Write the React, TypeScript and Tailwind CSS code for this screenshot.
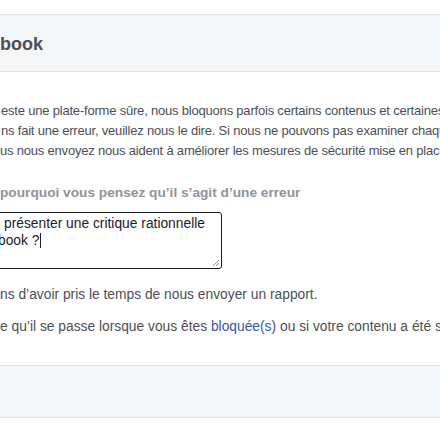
import React from 'react';

const App: React.FC = () => {
  return (
    <div className="w-[440px] h-[440px] bg-white overflow-hidden font-['Liberation_Sans',Arial,sans-serif] text-[#4b4f56]">
      <div className="h-[14px]" />

      {/* dialog header */}
      <div className="h-[58px] border-y border-[#e5e5e5] bg-[#f5f6f7] flex items-center pt-[1px] whitespace-nowrap">
        <span className="text-[18px] font-bold leading-[22px] text-[#4b4f56]">book</span>
      </div>

      {/* explanation */}
      <div className="mt-[29px] text-[13px] tracking-[-0.2px] leading-[20px] whitespace-nowrap">
        <div className="pl-[1px]">este une plate-forme sûre, nous bloquons parfois certains contenus et certaines actions.</div>
        <div className="pl-[1px]">ns fait une erreur, veuillez nous le dire. Si nous ne pouvons pas examiner chaque signalement,</div>
        <div>us nous envoyez nous aident à améliorer les mesures de sécurité mise en place.</div>
      </div>

      <div className="mt-[22px] text-[13.7px] leading-[20px] font-bold text-[#90949c] whitespace-nowrap">
        pourquoi vous pensez qu’il s’agit d’une erreur
      </div>

      {/* text box */}
      <div className="mt-[9px] -ml-[10px] w-[232px] h-[57px] border border-[#1c1e21] rounded-[3px] relative pl-[13px] pt-[2px] text-[13.8px] leading-[17px] text-[#1d2129] whitespace-nowrap overflow-hidden">
        <div>présenter une critique rationnelle</div>
        <div className="-ml-[6px] flex items-center">
          <span>book ?</span>
          <span className="inline-block w-px h-[15px] bg-[#1d2129] ml-[1px]" />
        </div>
        <svg className="absolute right-[1px] bottom-[1px]" width="9" height="9" viewBox="0 0 9 9">
          <path d="M8 2 L2 8 M8 5 L5 8" stroke="#8a8a8a" strokeWidth="1" />
        </svg>
      </div>

      <div className="mt-[16px] text-[13.8px] leading-[20px] whitespace-nowrap">
        ns d’avoir pris le temps de nous envoyer un rapport.
      </div>

      <div className="mt-[12px] text-[13.8px] leading-[20px] whitespace-nowrap">
        e qu’il se passe lorsque vous êtes <span className="text-[#385898]">bloquée(s)</span> ou si votre contenu a été supprimé.
      </div>

      {/* dialog footer */}
      <div className="mt-[28px] h-[53px] border-y border-[#e5e5e5] bg-[#f5f6f7]" />
    </div>
  );
};

export default App;
